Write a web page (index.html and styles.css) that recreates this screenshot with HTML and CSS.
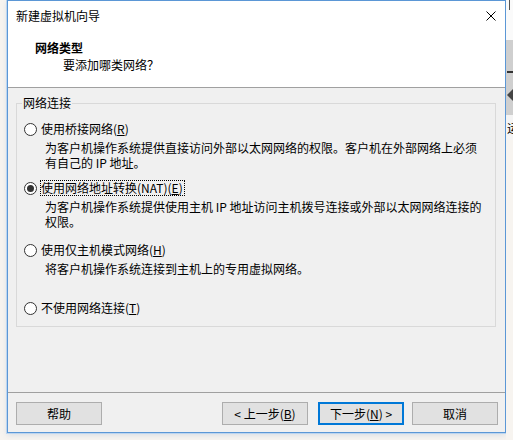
FILE: index.html
```html
<!DOCTYPE html>
<html lang="zh-CN">
<head>
<meta charset="utf-8">
<title>新建虚拟机向导</title>
<link rel="stylesheet" href="styles.css">
</head>
<body>
<div class="screen">
  <div class="side-left"></div>
  <div class="window">
    <div class="top">
      <div class="titlebar">
        <span class="title">新建虚拟机向导</span>
        <svg class="close" width="10" height="10" viewBox="0 0 10 10"><path d="M0.5 0.5 L9.5 9.5 M9.5 0.5 L0.5 9.5" stroke="#000" stroke-width="1" fill="none"/></svg>
      </div>
      <div class="header">
        <div class="h-title">网络类型</div>
        <div class="h-sub">要添加哪类网络？</div>
      </div>
    </div>
    <div class="body">
      <fieldset class="group">
        <legend class="legend">网络连接</legend>
        <div class="group-inner">
          <div class="option">
            <div class="radio-row"><span class="radio"></span><span class="label">使用桥接网络(<u>R</u>)</span></div>
            <div class="desc">为客户机操作系统提供直接访问外部以太网网络的权限。客户机在外部网络上必须<br>有自己的 IP 地址。</div>
          </div>
          <div class="option opt-2">
            <div class="radio-row"><span class="radio checked"></span><span class="label focused">使用网络地址转换(NAT)(<u>E</u>)</span></div>
            <div class="desc">为客户机操作系统提供使用主机 IP 地址访问主机拨号连接或外部以太网网络连接的<br>权限。</div>
          </div>
          <div class="option opt-3">
            <div class="radio-row"><span class="radio"></span><span class="label">使用仅主机模式网络(<u>H</u>)</span></div>
            <div class="desc">将客户机操作系统连接到主机上的专用虚拟网络。</div>
          </div>
          <div class="option opt-4">
            <div class="radio-row"><span class="radio"></span><span class="label">不使用网络连接(<u>T</u>)</span></div>
          </div>
        </div>
      </fieldset>
    </div>
    <div class="footer">
      <button class="btn">帮助</button>
      <div class="spacer"></div>
      <button class="btn">&lt; 上一步(<u>B</u>)</button>
      <button class="btn btn-default">下一步(<u>N</u>) &gt;</button>
      <button class="btn btn-cancel">取消</button>
    </div>
  </div>
  <div class="side-right">
    <div class="sr-top"><span class="sr-tick"></span></div>
    <div class="sr-gray">
      <span class="sr-dash"></span>
      <span class="sr-arrow"></span>
    </div>
    <div class="sr-text">运</div>
    <div class="sr-rest"></div>
  </div>
</div>
</body>
</html>
```
FILE: styles.css
```css
html, body {
  margin: 0;
  padding: 0;
}
body {
  background: #f7f4f0;
  font-family: "Noto Sans CJK SC", sans-serif;
  font-size: 12px;
  color: #000;
}
.screen {
  display: flex;
  width: 513px;
  height: 440px;
  overflow: hidden;
}
.side-left {
  width: 7px;
  flex: none;
}
.window {
  width: 499px;
  height: 433px;
  flex: none;
  box-sizing: border-box;
  border: 1px solid #5b97d6;
  box-shadow: 0 0 0 1px #bcd5ef, 0 2px 6px rgba(120, 150, 190, 0.25);
  display: flex;
  flex-direction: column;
  background: #f0f0f0;
}
.top {
  background: #fff;
  height: 86px;
  border-bottom: 1px solid #a0a0a0;
  flex: none;
}
.titlebar {
  height: 29px;
  display: flex;
  align-items: center;
  padding-left: 8px;
}
.title {
  line-height: 16px;
  flex: 1;
}
.close {
  margin-right: 9px;
  display: block;
}
.header {
  padding-top: 10px;
}
.h-title {
  font-weight: bold;
  line-height: 16px;
  padding-left: 27px;
}
.h-sub {
  line-height: 16px;
  padding-left: 55px;
  margin-top: 1px;
}
.body {
  height: 304px;
  flex: none;
  padding: 7px 9px 0 8px;
  box-sizing: border-box;
}
.group {
  margin: 0;
  padding: 0;
  min-width: 0;
  border: 1px solid #d9d9d9;
}
.legend {
  margin-left: 5px;
  padding: 0 1px;
  line-height: 16px;
  font-size: 12px;
}
.group-inner {
  padding: 10px 7px 10px 7px;
}
.radio-row {
  display: flex;
  align-items: center;
  height: 16px;
}
.radio {
  width: 13px;
  height: 13px;
  box-sizing: border-box;
  border: 1px solid #333;
  border-radius: 50%;
  background: #fff;
  margin-right: 3px;
  flex: none;
  display: flex;
  align-items: center;
  justify-content: center;
}
.radio.checked::after {
  content: "";
  width: 7px;
  height: 7px;
  border-radius: 50%;
  background: #333;
}
.label {
  line-height: 14px;
  border: 1px dotted transparent;
  padding: 0 1px 0 0;
  white-space: nowrap;
}
.label.focused {
  border-color: #000;
}
.desc {
  margin-top: 3px;
  padding-left: 21px;
  line-height: 15px;
  white-space: nowrap;
}
.opt-2 { margin-top: 10px; }
.opt-3 { margin-top: 13px; }
.opt-4 { margin-top: 24px; }
.footer {
  flex: 1;
  border-top: 1px solid #a0a0a0;
  display: flex;
  align-items: flex-start;
  padding: 9px 7px 0 8px;
}
.spacer {
  flex: 1;
}
.btn {
  width: 86px;
  height: 23px;
  box-sizing: border-box;
  padding: 0;
  margin: 0;
  background: #e1e1e1;
  border: 1px solid #adadad;
  font-family: "Noto Sans CJK SC", sans-serif;
  font-size: 12px;
  line-height: 21px;
  color: #000;
}
.btn-default {
  margin-left: 10px;
  border-color: #0078d7;
  box-shadow: inset 0 0 0 1px #0078d7;
}
.btn-cancel {
  margin-left: 8px;
}
.side-right {
  width: 7px;
  flex: none;
  display: flex;
  flex-direction: column;
  overflow: hidden;
}
.sr-top {
  height: 40px;
  background: #fafafa;
  position: relative;
}
.sr-tick {
  position: absolute;
  left: 3px;
  top: 0;
  width: 1px;
  height: 10px;
  background: #555;
}
.sr-gray {
  height: 75px;
  background: #cfcfcf;
  position: relative;
}
.sr-dash {
  position: absolute;
  left: 1px;
  top: 31px;
  width: 6px;
  height: 2px;
  background: #333;
}
.sr-arrow {
  position: absolute;
  left: 1px;
  top: 49px;
  width: 0;
  height: 0;
  border-top: 6px solid transparent;
  border-bottom: 6px solid transparent;
  border-right: 6px solid #444;
}
.sr-text {
  height: 25px;
  line-height: 25px;
  background: #f4f4f4;
  white-space: nowrap;
  padding-left: 1px;
}
.sr-rest {
  flex: 1;
  background: #f7f4f0;
}
```
